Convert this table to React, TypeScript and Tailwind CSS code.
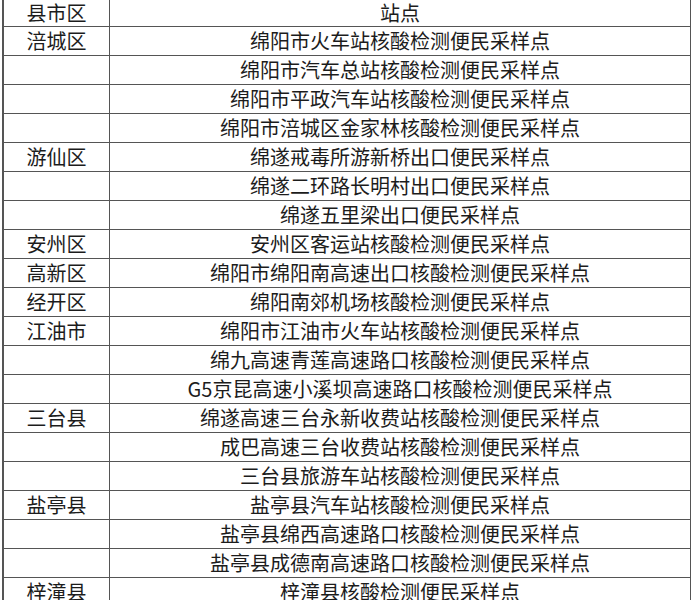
import React from 'react'

const rows: [string, string][] = [
  ['涪城区', '绵阳市火车站核酸检测便民采样点'],
  ['', '绵阳市汽车总站核酸检测便民采样点'],
  ['', '绵阳市平政汽车站核酸检测便民采样点'],
  ['', '绵阳市涪城区金家林核酸检测便民采样点'],
  ['游仙区', '绵遂戒毒所游新桥出口便民采样点'],
  ['', '绵遂二环路长明村出口便民采样点'],
  ['', '绵遂五里梁出口便民采样点'],
  ['安州区', '安州区客运站核酸检测便民采样点'],
  ['高新区', '绵阳市绵阳南高速出口核酸检测便民采样点'],
  ['经开区', '绵阳南郊机场核酸检测便民采样点'],
  ['江油市', '绵阳市江油市火车站核酸检测便民采样点'],
  ['', '绵九高速青莲高速路口核酸检测便民采样点'],
  ['', 'G5京昆高速小溪坝高速路口核酸检测便民采样点'],
  ['三台县', '绵遂高速三台永新收费站核酸检测便民采样点'],
  ['', '成巴高速三台收费站核酸检测便民采样点'],
  ['', '三台县旅游车站核酸检测便民采样点'],
  ['盐亭县', '盐亭县汽车站核酸检测便民采样点'],
  ['', '盐亭县绵西高速路口核酸检测便民采样点'],
  ['', '盐亭县成德南高速路口核酸检测便民采样点'],
  ['梓潼县', '梓潼县核酸检测便民采样点'],
]

const Row: React.FC<{ a: string; b: string; header?: boolean }> = ({ a, b, header }) => (
  <div className={`flex border-b border-[#555] ${header ? 'h-[27px]' : 'h-[29px]'}`}>
    <div className="w-[106px] shrink-0 flex items-center justify-center border-r border-[#555]">{a}</div>
    <div className="flex-1 flex items-center justify-center">{b}</div>
  </div>
)

export default function App() {
  return (
    <div className="w-[700px] h-[600px] overflow-hidden bg-white">
      <div
        className="ml-[2px] w-[689px] border-l-2 border-r border-[#555] text-[20px] leading-none text-[#1c1c1c] whitespace-nowrap"
        style={{ fontFamily: '"Noto Sans CJK SC", "Liberation Sans", sans-serif' }}
      >
        <Row a="县市区" b="站点" header />
        {rows.map(([a, b], i) => (
          <Row key={i} a={a} b={b} />
        ))}
      </div>
    </div>
  )
}
